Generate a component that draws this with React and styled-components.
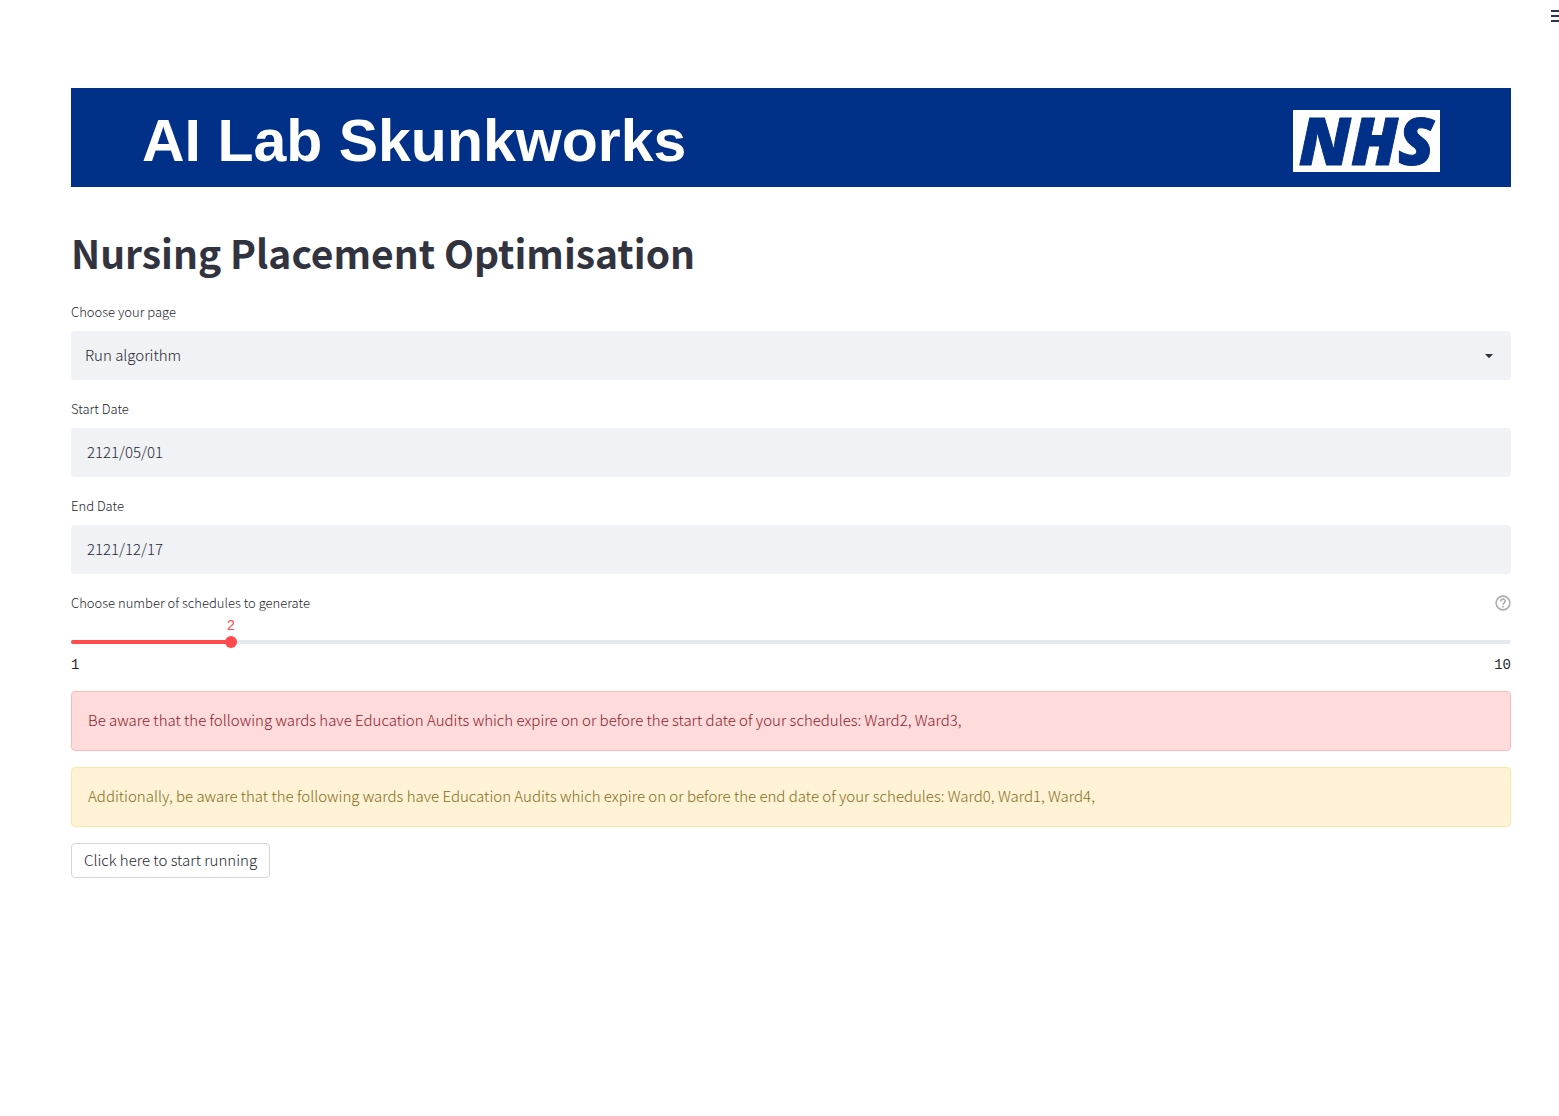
import React, { useState } from 'react';
import styled, { createGlobalStyle } from 'styled-components';


const PAGES = ['Run algorithm'];
const MIN_SCHEDULES = 1;
const MAX_SCHEDULES = 10;


const GlobalStyle = createGlobalStyle`
  *, *::before, *::after {
    box-sizing: border-box;
  }

  body {
    margin: 0;
    background: #ffffff;
    color: #262730;
    font-family: "Source Sans Pro", "Noto Sans CJK SC", sans-serif;
    font-size: 15px;
    font-weight: 300;
    line-height: 26px;
    overflow-x: hidden;
  }

  button, input, select {
    color: inherit;
    font: inherit;
  }
`;

const Header = styled.header`
  display: flex;
  justify-content: flex-end;
  height: 32px;
  overflow: hidden;
`;

const MenuButton = styled.button`
  display: flex;
  align-items: center;
  justify-content: flex-start;
  width: 8px;
  padding: 0;
  border: 0;
  background: transparent;

  svg {
    flex: none;
  }
`;

const Main = styled.main`
  padding: 56px 48px 80px 71px;
`;

const Banner = styled.div`
  display: flex;
  align-items: center;
  justify-content: space-between;
  height: 99px;
  padding: 0 71px;
  background: #003087;
  color: #ffffff;
`;

const BannerTitle = styled.span`
  padding-top: 6px;
  font-family: "Liberation Sans", Arial, sans-serif;
  font-size: 59px;
  font-weight: 700;
  line-height: 68px;
`;

const Logo = styled.span`
  display: flex;
  justify-content: center;
  width: 147px;
  height: 62px;
  margin-top: 7px;
  background: #ffffff;
  color: #003087;
  font-family: "Open Sans", sans-serif;
  font-size: 66px;
  font-style: italic;
  font-weight: 800;
  line-height: 58px;
  -webkit-text-stroke: 1px #003087;
`;

const Title = styled.h1`
  margin: 35px 0 20px;
  color: #31333f;
  font-size: 39px;
  font-weight: 700;
  line-height: 60px;
`;

const Field = styled.div`
  margin-bottom: 19px;
`;

const LabelRow = styled.div`
  display: flex;
  align-items: center;
  justify-content: space-between;
  height: 20px;
  margin-bottom: ${({ $gap }) => $gap || '9px'};
`;

const Label = styled.label`
  font-size: 13px;
  line-height: 20px;
`;

const HelpButton = styled.button`
  display: flex;
  padding: 0;
  border: 0;
  background: transparent;
  color: #adadb0;
`;

const SelectBox = styled.div`
  display: grid;
  align-items: center;

  > * {
    grid-area: 1 / 1;
  }

  svg {
    justify-self: end;
    margin-right: 18px;
    pointer-events: none;
  }
`;

const Select = styled.select`
  appearance: none;
  width: 100%;
  height: 49px;
  padding: 0 14px 2px;
  border: 0;
  border-radius: 4px;
  background: #f0f2f6;
`;

const DateInput = styled.input`
  display: block;
  width: 100%;
  height: 49px;
  padding: 0 16px 2px;
  border: 0;
  border-radius: 4px;
  background: #f0f2f6;
`;

const Slider = styled.div`
  position: relative;
  display: flex;
  height: 12px;
  align-items: center;
`;

const SliderValue = styled.output`
  position: absolute;
  bottom: 14px;
  transform: translateX(-50%);
  color: #ff4b4b;
  font-family: "Liberation Mono", monospace;
  font-size: 14px;
  line-height: 16px;
`;

const Track = styled.div`
  flex: 1;
  height: 4px;
  border-radius: 4px;
  background: #e4e9f1;
  overflow: hidden;
`;

const TrackFill = styled.div`
  height: 100%;
  background: #ff4b4b;
`;

/* wider than the track by one thumb, so the thumb centre reaches both ends */
const Range = styled.input`
  position: absolute;
  left: -6px;
  appearance: none;
  width: calc(100% + 12px);
  height: 12px;
  margin: 0;
  background: transparent;

  &::-webkit-slider-thumb {
    appearance: none;
    width: 12px;
    height: 12px;
    border: 0;
    border-radius: 50%;
    background: #ff4b4b;
  }
`;

const Ticks = styled.div`
  display: flex;
  justify-content: space-between;
  margin: 9px 0 18px;
  font-family: "Liberation Mono", monospace;
  font-size: 14px;
  line-height: 16px;
`;

const Alert = styled.div`
  margin-bottom: 16px;
  padding: 15px 16px 17px;
  border: 1px solid ${({ $kind }) => ($kind === 'error' ? '#ffb9bb' : '#fde7a8')};
  border-radius: 4px;
  background: ${({ $kind }) => ($kind === 'error' ? '#ffdbdb' : '#fff2d5')};
  color: ${({ $kind }) => ($kind === 'error' ? '#8f1a2b' : '#866c1c')};
`;

const RunButton = styled.button`
  height: 35px;
  padding: 0 12px 2px;
  border: 1px solid #d6d6d9;
  border-radius: 4px;
  background: #ffffff;
`;


const App = () => {
  const [page, setPage] = useState(PAGES[0]);
  const [startDate, setStartDate] = useState('2121/05/01');
  const [endDate, setEndDate] = useState('2121/12/17');
  const [schedules, setSchedules] = useState(2);

  const position = `${((schedules - MIN_SCHEDULES) / (MAX_SCHEDULES - MIN_SCHEDULES)) * 100}%`;

  return (
    <>
      <GlobalStyle />
      <Header>
        <MenuButton aria-label="Menu">
          <svg width="13" height="16" viewBox="0 0 13 16" fill="#31333f">
            <path d="M0 2h13v2H0zM0 7h13v2H0zM0 12h13v2H0z" />
          </svg>
        </MenuButton>
      </Header>

      <Main>
        <Banner>
          <BannerTitle>AI Lab Skunkworks</BannerTitle>
          <Logo>NHS</Logo>
        </Banner>

        <Title>Nursing Placement Optimisation</Title>

        <Field>
          <LabelRow>
            <Label htmlFor="page">Choose your page</Label>
          </LabelRow>
          <SelectBox>
            <Select id="page" value={page} onChange={e => setPage(e.target.value)}>
              {PAGES.map(item => (
                <option value={item} key={item}>{item}</option>
              ))}
            </Select>
            <svg width="8" height="4" viewBox="0 0 8 4" fill="#31333f">
              <path d="M0 0h8L4.700 3.600Q4 4.200 3.300 3.600z" />
            </svg>
          </SelectBox>
        </Field>

        <Field>
          <LabelRow>
            <Label htmlFor="start-date">Start Date</Label>
          </LabelRow>
          <DateInput id="start-date" value={startDate} onChange={e => setStartDate(e.target.value)} />
        </Field>

        <Field>
          <LabelRow>
            <Label htmlFor="end-date">End Date</Label>
          </LabelRow>
          <DateInput id="end-date" value={endDate} onChange={e => setEndDate(e.target.value)} />
        </Field>

        <LabelRow $gap="23px">
          <Label htmlFor="schedules">Choose number of schedules to generate</Label>
          <HelpButton aria-label="Help">
            <svg width="16" height="16" viewBox="0 0 24 24" fill="none" stroke="currentColor" strokeWidth="2.4" strokeLinejoin="round">
              <circle cx="12" cy="12" r="10.300" />
              <path d="M8.600 9.700a3.400 3.400 0 0 1 6.800-.2c0 2.300-3.400 2.400-3.400 5.200" />
              <path d="M12 16.200v2.500" />
            </svg>
          </HelpButton>
        </LabelRow>
        <Slider>
          <SliderValue htmlFor="schedules" style={{ left: position }}>{schedules}</SliderValue>
          <Track>
            <TrackFill style={{ width: position }} />
          </Track>
          <Range
            id="schedules"
            type="range"
            min={MIN_SCHEDULES}
            max={MAX_SCHEDULES}
            value={schedules}
            onChange={e => setSchedules(Number(e.target.value))}
          />
        </Slider>
        <Ticks>
          <span>{MIN_SCHEDULES}</span>
          <span>{MAX_SCHEDULES}</span>
        </Ticks>

        <Alert $kind="error" role="alert">
          Be aware that the following wards have Education Audits which expire on or before the start date of your schedules: Ward2, Ward3,
        </Alert>
        <Alert $kind="warning" role="alert">
          Additionally, be aware that the following wards have Education Audits which expire on or before the end date of your schedules: Ward0, Ward1, Ward4,
        </Alert>

        <RunButton>Click here to start running</RunButton>
      </Main>
    </>
  );
};

export default App;
